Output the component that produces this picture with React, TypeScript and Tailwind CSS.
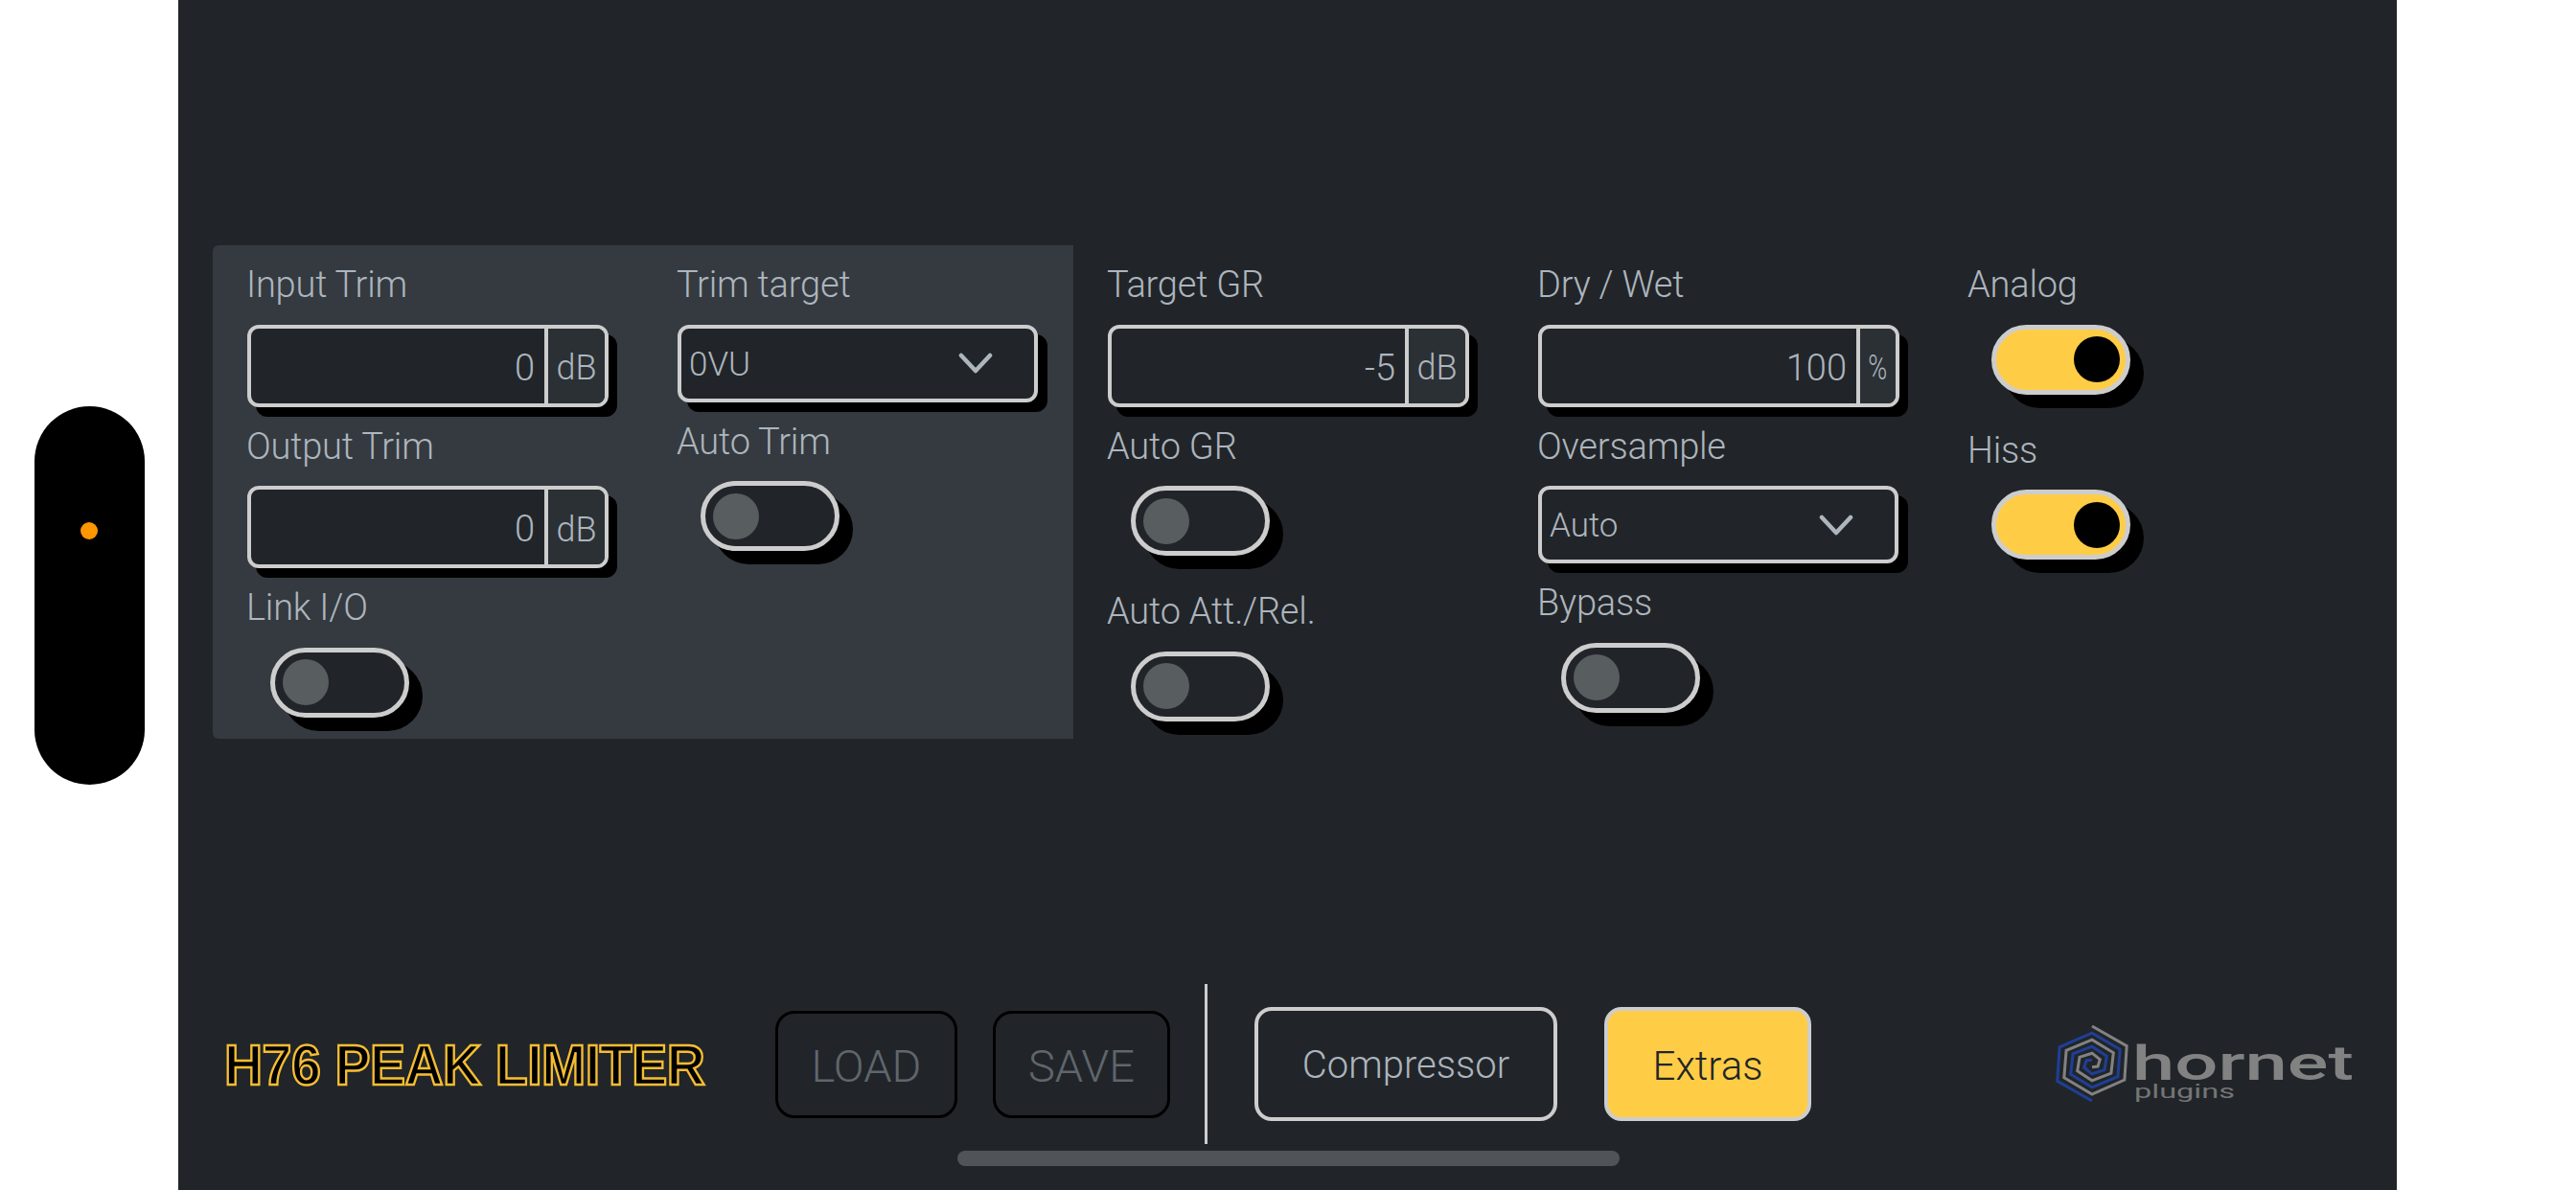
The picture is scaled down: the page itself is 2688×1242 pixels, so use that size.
import React from "react";

const F = "font-['Roboto','Liberation_Sans',sans-serif]";

function Label({ children }: { children: string }) {
  return (
    <div className={`h-[82.5px] flex items-center -ml-[1px] text-[38px] font-light leading-none text-[#adb5bd] tracking-[-0.2px] whitespace-nowrap ${F}`}>
      {children}
    </div>
  );
}

function NumberInput({ value, unit }: { value: string; unit: string }) {
  const pct = unit === "%";
  return (
    <div className="w-[377px] h-[86px] flex border-[4px] border-[#cdcdcd] rounded-[12px] bg-[#212529] shadow-[9px_10px_0_#000]">
      <div className={`flex-1 flex items-center justify-end pr-[10px] pt-[5px] text-[38px] font-light text-[#adb5bd] ${F}`}>{value}</div>
      <div className={`${pct ? "w-[41px]" : "w-[63px]"} shrink-0 border-l-[4px] border-[#cdcdcd] bg-[#2b3035] rounded-r-[8px] flex items-center justify-center pt-[5px] text-[36px] font-light text-[#adb5bd] ${F}`}>
        <span className={pct ? "scale-x-75" : ""}>{unit}</span>
      </div>
    </div>
  );
}

function Select({ value }: { value: string }) {
  return (
    <div className="w-[376px] h-[81px] flex items-center justify-between pl-[8px] pr-[43px] border-[4px] border-[#cdcdcd] rounded-[12px] bg-[#212529] shadow-[10px_10px_0_#000]">
      <span className={`text-[35px] font-light text-[#adb5bd] pt-[4px] ${F}`}>{value}</span>
      <svg width="36" height="22" viewBox="0 0 36 22" fill="none" stroke="#adb5bd" strokeWidth="4.5" strokeLinecap="round" strokeLinejoin="round">
        <polyline points="3,3 18,19 33,3" />
      </svg>
    </div>
  );
}

function Toggle({ on, last }: { on?: boolean; last?: boolean }) {
  return (
    <div className={`w-[145px] h-[73px] ml-[24px] ${last ? "" : "mb-[17px]"} flex items-center rounded-full border-[5px] border-[#cdcdcd] shadow-[14px_14px_0_#000] ${on ? "bg-[#ffcd45] justify-end pr-[6px]" : "bg-[#212529] pl-[8px]"}`}>
      <div className={`w-[48px] h-[48px] rounded-full ${on ? "bg-black" : "bg-[#585d60]"}`} />
    </div>
  );
}

function Col({ children }: { children: React.ReactNode }) {
  return <div className="w-[449px] pl-[36px] pr-[35px]">{children}</div>;
}

function spiral(cx: number, cy: number, r0: number, start: number, n: number, dr: number) {
  const pts: string[] = [];
  for (let i = 0; i < n; i++) {
    const r = r0 - dr * i;
    const a = ((start + i * 60) * Math.PI) / 180;
    pts.push(`${(cx + 1.14 * r * Math.sin(a)).toFixed(1)},${(cy - r * Math.cos(a)).toFixed(1)}`);
  }
  return pts.join(" ");
}

function Logo() {
  return (
    <svg width="312" height="100" viewBox="0 0 312 100" className="ml-[255px] shrink-0">
      <polyline points={spiral(38, 49, 39, 0, 16, 2.35)} fill="none" stroke="#828282" strokeWidth="3" />
      <polyline points={spiral(38, 49, 39, 180, 16, 2.35)} fill="none" stroke="#1f3f96" strokeWidth="3" />
      <text x="80" y="66" fontFamily="Roboto, sans-serif" fontSize="50" fontWeight="500" fill="#828282" textLength="231" lengthAdjust="spacingAndGlyphs">hornet</text>
      <text x="82" y="85" fontFamily="Roboto, sans-serif" fontSize="21" fontWeight="400" fill="#757575" textLength="105" lengthAdjust="spacingAndGlyphs">plugins</text>
    </svg>
  );
}

export default function App() {
  return (
    <div className="relative flex w-full h-[1242px] bg-white overflow-hidden">
      <div className="w-[186px] shrink-0 flex items-center justify-center">
        <div className="w-[115px] h-[395px] rounded-full bg-black flex justify-center pt-[121px]">
          <div className="w-[18px] h-[18px] rounded-full bg-[#ff9500]" />
        </div>
      </div>

      <div className="w-[2315px] shrink-0 bg-[#212529] flex flex-col pt-[256px]">
        <div className="flex pl-[36px] h-[515px]">
          <div className="flex bg-[#343a40] rounded-l-[6px] w-[898px] h-[515px]">
            <Col>
              <Label>Input Trim</Label>
              <NumberInput value="0" unit="dB" />
              <Label>Output Trim</Label>
              <NumberInput value="0" unit="dB" />
              <Label>Link I/O</Label>
              <Toggle last />
            </Col>
            <Col>
              <Label>Trim target</Label>
              <Select value="0VU" />
              <Label>Auto Trim</Label>
              <Toggle last />
            </Col>
          </div>
          <Col>
            <Label>Target GR</Label>
            <NumberInput value="-5" unit="dB" />
            <Label>Auto GR</Label>
            <Toggle />
            <Label>Auto Att./Rel.</Label>
            <Toggle last />
          </Col>
          <Col>
            <Label>Dry / Wet</Label>
            <NumberInput value="100" unit="%" />
            <Label>Oversample</Label>
            <Select value="Auto" />
            <Label>Bypass</Label>
            <Toggle last />
          </Col>
          <Col>
            <Label>Analog</Label>
            <Toggle on />
            <Label>Hiss</Label>
            <Toggle on last />
          </Col>
        </div>

        <div className="mt-[256px] h-[167px] flex items-center pl-[48px]">
          <div className="w-[501px] shrink-0 whitespace-nowrap font-['Liberation_Sans',sans-serif] font-bold text-[60px] leading-none pt-[3px] text-black tracking-[-0.5px] origin-left scale-x-[0.925] [-webkit-text-stroke:2.5px_#f5bd33]">
            H76 PEAK LIMITER
          </div>
          <div className={`ml-[74px] w-[190px] h-[112px] shrink-0 flex items-center justify-center pt-[5px] rounded-[20px] border-[3px] border-black text-[#5f666d] text-[47px] font-light ${F}`}>LOAD</div>
          <div className={`ml-[37px] w-[185px] h-[112px] shrink-0 flex items-center justify-center pt-[5px] rounded-[20px] border-[3px] border-black text-[#5f666d] text-[47px] font-light ${F}`}>SAVE</div>
          <div className="ml-[36px] w-[3px] h-[167px] shrink-0 bg-[#cdcdcd]" />
          <div className={`ml-[49px] w-[316px] h-[119px] shrink-0 flex items-center justify-center pt-[3px] rounded-[18px] border-[4px] border-[#cdcdcd] bg-[#212529] text-[#adb5bd] text-[40px] font-light ${F}`}>Compressor</div>
          <div className={`ml-[49px] w-[216px] h-[119px] shrink-0 flex items-center justify-center pt-[3px] rounded-[18px] border-[4px] border-[#cdcdcd] bg-[#ffcd45] text-[#212529] text-[42px] font-light ${F}`}>Extras</div>
          <Logo />
        </div>
      </div>

      <div className="flex-1" />
      <div className="absolute left-[999px] top-[1201px] w-[691px] h-[16px] rounded-full bg-[#505458]" />
    </div>
  );
}
